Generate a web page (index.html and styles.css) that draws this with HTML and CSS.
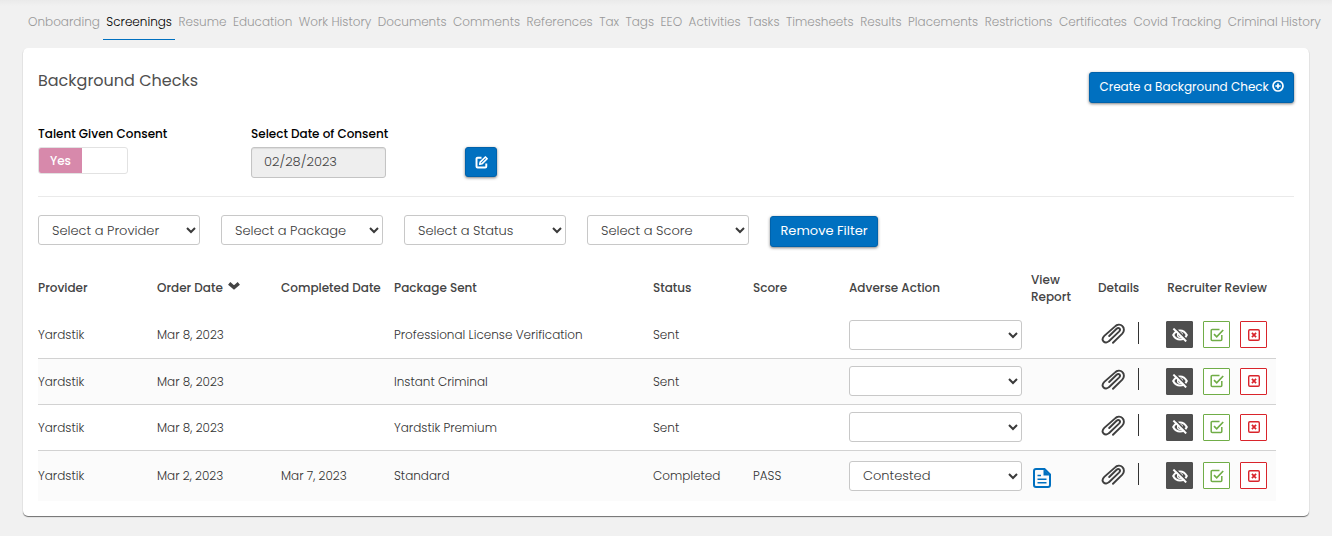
FILE: index.html
```
<!DOCTYPE html>
<html lang="en">

<head>
  <meta charset="UTF-8">
  <meta name="viewport" content="width=device-width, initial-scale=1.0">
  <title>Background Checks</title>
  <link rel="stylesheet" href="styles.css">
</head>

<body>
  <!-- icons -->
  <svg class="sprite" aria-hidden="true">
    <symbol id="plus-circle" viewBox="0 0 12 12">
      <circle cx="6" cy="6" r="5" fill="none" stroke="currentColor" stroke-width="1.7" />
      <path d="M6 3.4v5.2M3.4 6h5.2" stroke="currentColor" stroke-width="1.7" />
    </symbol>
    <symbol id="edit" viewBox="0 0 12 12">
      <path d="M6 1.6H2.4a1 1 0 0 0-1 1v7a1 1 0 0 0 1 1h7a1 1 0 0 0 1-1V7" fill="none" stroke="currentColor" stroke-width="1.8" />
      <path d="M4.4 7.6l.4-2L9.6.9l1.6 1.6-4.8 4.7z" fill="none" stroke="currentColor" stroke-width="1.5" stroke-linejoin="round" />
    </symbol>
    <symbol id="chevron" viewBox="0 0 12 8">
      <path d="M1.2 1.4L6 5.6l4.8-4.2" fill="none" stroke="currentColor" stroke-width="3.4" />
    </symbol>
    <symbol id="clip" viewBox="0 0 24 22">
      <path d="M12 20.800l9.300-9.100c2-2.100 2.200-5.600.2-7.500-2.200-2.200-5.500-1.700-7.700.400L3.300 13.900c-1.900 1.900-2.100 4.200-.7 5.600s3.700 1.300 5.300-.3L18 9.600c1-1 1.300-2.300.5-3.100s-2-.6-2.900.2L8.200 14" fill="none" stroke="currentColor" stroke-width="1.900" stroke-linecap="round" />
    </symbol>
    <symbol id="eye-off" viewBox="0 0 16 14">
      <path d="M1.2 7Q3.5 2.4 8 2.4T14.8 7Q12.5 11.6 8 11.6T1.2 7z" fill="none" stroke="currentColor" stroke-width="2" />
      <circle cx="8" cy="7" r="2.4" fill="none" stroke="currentColor" stroke-width="1.3" />
      <path d="M2.8-.4l12.6 12.8" stroke="#4f4f4f" stroke-width="1.6" />
      <path d="M1.4.6l12.8 12.8" stroke="currentColor" stroke-width="2" />
    </symbol>
    <symbol id="check-box" viewBox="0 0 14 14">
      <path d="M9.5 1.6H2.2a1 1 0 0 0-1 1v9a1 1 0 0 0 1 1h8.6a1 1 0 0 0 1-1V7" fill="none" stroke="currentColor" stroke-width="1.5" />
      <path d="M4 6.2l2.7 2.7L13.2 2" fill="none" stroke="currentColor" stroke-width="1.7" />
    </symbol>
    <symbol id="x-box" viewBox="0 0 14 14">
      <rect x="1.7" y="1.7" width="10.6" height="10.6" rx="1.2" fill="none" stroke="currentColor" stroke-width="1.4" />
      <path d="M4.9 4.9l4.2 4.2M9.1 4.9L4.9 9.1" stroke="currentColor" stroke-width="1.7" />
    </symbol>
    <symbol id="report" viewBox="0 0 18 20">
      <path d="M11.5 1H3a2 2 0 0 0-2 2v14a2 2 0 0 0 2 2h12a2 2 0 0 0 2-2V6.5z" fill="none" stroke="currentColor" stroke-width="2" />
      <path d="M10.5 1v6.5H17z" fill="currentColor" />
      <path d="M4.5 7.500h3.500M4.500 11.200h9M4.500 14.800h9" stroke="currentColor" stroke-width="1.6" />
    </symbol>
  </svg>

  <nav class="tabs">
    <a href="#">Onboarding</a>
    <a href="#" class="active">Screenings</a>
    <a href="#">Resume</a>
    <a href="#">Education</a>
    <a href="#">Work History</a>
    <a href="#">Documents</a>
    <a href="#">Comments</a>
    <a href="#">References</a>
    <a href="#">Tax</a>
    <a href="#">Tags</a>
    <a href="#">EEO</a>
    <a href="#">Activities</a>
    <a href="#">Tasks</a>
    <a href="#">Timesheets</a>
    <a href="#">Results</a>
    <a href="#">Placements</a>
    <a href="#">Restrictions</a>
    <a href="#">Certificates</a>
    <a href="#">Covid Tracking</a>
    <a href="#">Criminal History</a>
  </nav>

  <main class="card">
    <div class="card-head">
      <h1>Background Checks</h1>
      <button class="btn btn-create">Create a Background Check <svg width="12" height="12"><use href="#plus-circle" /></svg></button>
    </div>

    <div class="consent">
      <div>
        <label class="caption" for="consent">Talent Given Consent</label>
        <label class="switch">
          <input type="checkbox" id="consent" checked>
          <span class="switch-on">Yes</span>
        </label>
      </div>
      <div>
        <label class="caption" for="consent-date">Select Date of Consent</label>
        <input class="date" type="text" id="consent-date" value="02/28/2023" readonly>
      </div>
      <button class="btn btn-edit" aria-label="Edit consent"><svg width="13" height="13"><use href="#edit" /></svg></button>
    </div>

    <div class="filters">
      <select aria-label="Provider"><option>Select a Provider</option></select>
      <select aria-label="Package"><option>Select a Package</option></select>
      <select aria-label="Status"><option>Select a Status</option></select>
      <select aria-label="Score"><option>Select a Score</option></select>
      <button class="btn btn-filter">Remove Filter</button>
    </div>

    <table class="checks">
      <colgroup>
        <col class="col-provider">
        <col class="col-order">
        <col class="col-completed">
        <col>
        <col class="col-status">
        <col class="col-score">
        <col class="col-action">
        <col class="col-report">
        <col class="col-details">
        <col class="col-review">
      </colgroup>
      <thead>
        <tr>
          <th>Provider</th>
          <th>Order Date <svg class="sort" width="12" height="8"><use href="#chevron" /></svg></th>
          <th>Completed Date</th>
          <th>Package Sent</th>
          <th>Status</th>
          <th>Score</th>
          <th>Adverse Action</th>
          <th>View<br>Report</th>
          <th>Details</th>
          <th class="review-head">Recruiter Review</th>
        </tr>
      </thead>
      <tbody>
        <tr>
          <td>Yardstik</td>
          <td>Mar 8, 2023</td>
          <td></td>
          <td>Professional License Verification</td>
          <td>Sent</td>
          <td></td>
          <td><select aria-label="Adverse action"><option></option><option>Contested</option></select></td>
          <td></td>
          <td><a href="#" class="details" aria-label="Details"><svg width="24" height="22"><use href="#clip" /></svg></a></td>
          <td>
            <div class="review">
              <button class="hide" aria-label="Hide"><svg width="16" height="14"><use href="#eye-off" /></svg></button>
              <button class="approve" aria-label="Approve"><svg width="14" height="14"><use href="#check-box" /></svg></button>
              <button class="reject" aria-label="Reject"><svg width="14" height="14"><use href="#x-box" /></svg></button>
            </div>
          </td>
        </tr>
        <tr>
          <td>Yardstik</td>
          <td>Mar 8, 2023</td>
          <td></td>
          <td>Instant Criminal</td>
          <td>Sent</td>
          <td></td>
          <td><select aria-label="Adverse action"><option></option><option>Contested</option></select></td>
          <td></td>
          <td><a href="#" class="details" aria-label="Details"><svg width="24" height="22"><use href="#clip" /></svg></a></td>
          <td>
            <div class="review">
              <button class="hide" aria-label="Hide"><svg width="16" height="14"><use href="#eye-off" /></svg></button>
              <button class="approve" aria-label="Approve"><svg width="14" height="14"><use href="#check-box" /></svg></button>
              <button class="reject" aria-label="Reject"><svg width="14" height="14"><use href="#x-box" /></svg></button>
            </div>
          </td>
        </tr>
        <tr>
          <td>Yardstik</td>
          <td>Mar 8, 2023</td>
          <td></td>
          <td>Yardstik Premium</td>
          <td>Sent</td>
          <td></td>
          <td><select aria-label="Adverse action"><option></option><option>Contested</option></select></td>
          <td></td>
          <td><a href="#" class="details" aria-label="Details"><svg width="24" height="22"><use href="#clip" /></svg></a></td>
          <td>
            <div class="review">
              <button class="hide" aria-label="Hide"><svg width="16" height="14"><use href="#eye-off" /></svg></button>
              <button class="approve" aria-label="Approve"><svg width="14" height="14"><use href="#check-box" /></svg></button>
              <button class="reject" aria-label="Reject"><svg width="14" height="14"><use href="#x-box" /></svg></button>
            </div>
          </td>
        </tr>
        <tr class="completed">
          <td>Yardstik</td>
          <td>Mar 2, 2023</td>
          <td>Mar 7, 2023</td>
          <td>Standard</td>
          <td>Completed</td>
          <td>PASS</td>
          <td><select aria-label="Adverse action"><option></option><option selected>Contested</option></select></td>
          <td><a href="#" class="report" aria-label="View report"><svg width="18" height="20"><use href="#report" /></svg></a></td>
          <td><a href="#" class="details" aria-label="Details"><svg width="24" height="22"><use href="#clip" /></svg></a></td>
          <td>
            <div class="review">
              <button class="hide" aria-label="Hide"><svg width="16" height="14"><use href="#eye-off" /></svg></button>
              <button class="approve" aria-label="Approve"><svg width="14" height="14"><use href="#check-box" /></svg></button>
              <button class="reject" aria-label="Reject"><svg width="14" height="14"><use href="#x-box" /></svg></button>
            </div>
          </td>
        </tr>
      </tbody>
    </table>
  </main>
</body>

</html>
```
FILE: styles.css
```
* {
  margin: 0;
  padding: 0;
  box-sizing: border-box;
}

body {
  background: #f1f1f1 linear-gradient(#eaeaea, #f1f1f1) 0 0 / 100% 6px no-repeat;
  font-family: Poppins, Inter, sans-serif;
  font-size: 12px;
  font-weight: 300;
  line-height: 17px;
  color: #333333;
}

button,
input,
select {
  font-family: inherit;
  font-weight: inherit;
}

svg {
  display: inline-block;
}

.sprite {
  position: absolute;
  width: 0;
  height: 0;
}

.tabs {
  display: flex;
  height: 48px;
  padding: 4px 8px 8px 25px;
  justify-content: space-between;
}

.tabs a {
  height: 36px;
  padding: 0 3px;
  line-height: 36px;
  color: #999999;
  text-decoration: none;
  white-space: nowrap;
}

.tabs .active {
  color: #000000;
  border-bottom: 1px solid #0070c0;
}

.card {
  margin: 0 23px 20px;
  padding: 24px 15px 15px;
  background: #ffffff;
  border-radius: 5px;
  box-shadow: 0 1px 1px rgba(0, 0, 0, 0.55);
}

.card-head {
  display: flex;
  justify-content: space-between;
  align-items: flex-start;
}

h1 {
  font-size: 16px;
  font-weight: 400;
  line-height: 17px;
  color: #4f4f4f;
}

.btn {
  background: #0070c0;
  color: #ffffff;
  border: 1px solid #0062ab;
  border-radius: 3px;
  box-shadow: 0 1px 3px rgba(0, 0, 0, 0.5);
  font-weight: 400;
  cursor: pointer;
}

.btn-create {
  height: 31px;
  padding: 0 9px 2px;
  font-size: 12px;
}

.btn-create svg {
  vertical-align: -1px;
}

.btn-edit {
  width: 32px;
  height: 30px;
  margin-top: 22px;
}

.btn-edit svg {
  vertical-align: -3px;
}

.btn-filter {
  width: 108px;
  height: 31px;
  margin-top: 1px;
  padding-bottom: 2px;
  font-size: 13px;
}

.consent {
  display: grid;
  grid-template-columns: 213px 214px auto;
  justify-content: start;
  margin-top: 22px;
  padding-bottom: 18px;
  border-bottom: 1px solid #eaeaea;
}

.caption {
  display: block;
  height: 22px;
  font-weight: 500;
  color: #000000;
}

.switch {
  position: relative;
  display: flex;
  width: 90px;
  height: 27px;
  border: 1px solid #e2e2e2;
  border-radius: 3px;
  overflow: hidden;
}

.switch input {
  position: absolute;
  opacity: 0;
}

.switch-on {
  width: 43px;
  line-height: 25px;
  text-align: center;
  font-weight: 500;
  color: #ffffff;
  background: #d789ab;
}

.date {
  display: block;
  width: 135px;
  height: 31px;
  padding: 0 12px 2px;
  font-size: 13px;
  color: #444444;
  background: #eeeeee;
  border: 1px solid #c4c4c4;
  border-radius: 3px;
  box-shadow: inset 0 1px 1px rgba(0, 0, 0, 0.08);
}

.filters {
  display: flex;
  gap: 21px;
  margin-top: 18px;
}

select {
  width: 162px;
  height: 30px;
  padding: 0 4px 0 9px;
  font-size: 13px;
  color: #3a3a3a;
  background-color: #ffffff;
  border: 1px solid #c8c8c8;
  border-radius: 3px;
}

.checks {
  width: calc(100% - 18px);
  margin-top: 18px;
  table-layout: fixed;
  border-collapse: collapse;
  text-align: left;
}

.col-provider { width: 119px; }
.col-order { width: 124px; }
.col-completed { width: 113px; }
.col-status { width: 100px; }
.col-score { width: 96px; }
.col-action { width: 182px; }
.col-report { width: 67px; }
.col-details { width: 62px; }
.col-review { width: 116px; }

.checks th {
  height: 47px;
  padding-bottom: 2px;
  font-weight: 500;
  color: #444444;
  white-space: nowrap;
}

.checks td {
  height: 46px;
  border-bottom: 1px solid #d2d2d2;
}

.checks .completed td {
  height: 51px;
  border-bottom: none;
}

.checks tbody tr:nth-child(even) {
  background: #fbfbfb;
}

.checks select {
  display: block;
  width: 173px;
}

.checks .review-head {
  padding-right: 9px;
  text-align: right;
}

.sort {
  margin-left: 2px;
  vertical-align: 2px;
}

.details {
  display: flex;
  width: 41px;
  height: 22px;
  margin-bottom: 4px;
  padding-left: 3px;
  border-right: 1px solid #333333;
  color: #3f3f3f;
}

.report {
  display: flex;
  padding: 4px 0 0 2px;
  color: #0070c0;
}

.review {
  display: flex;
  justify-content: flex-end;
  gap: 10px;
  padding-right: 9px;
}

.review button {
  display: flex;
  align-items: center;
  justify-content: center;
  width: 27px;
  height: 27px;
  background: #ffffff;
  border: 1px solid;
  border-radius: 1px;
  cursor: pointer;
}

.review .hide {
  background: #4f4f4f;
  border-color: #4f4f4f;
  color: #ffffff;
}

.review .approve {
  color: #70ad47;
}

.review .reject {
  color: #d9242b;
}
```
